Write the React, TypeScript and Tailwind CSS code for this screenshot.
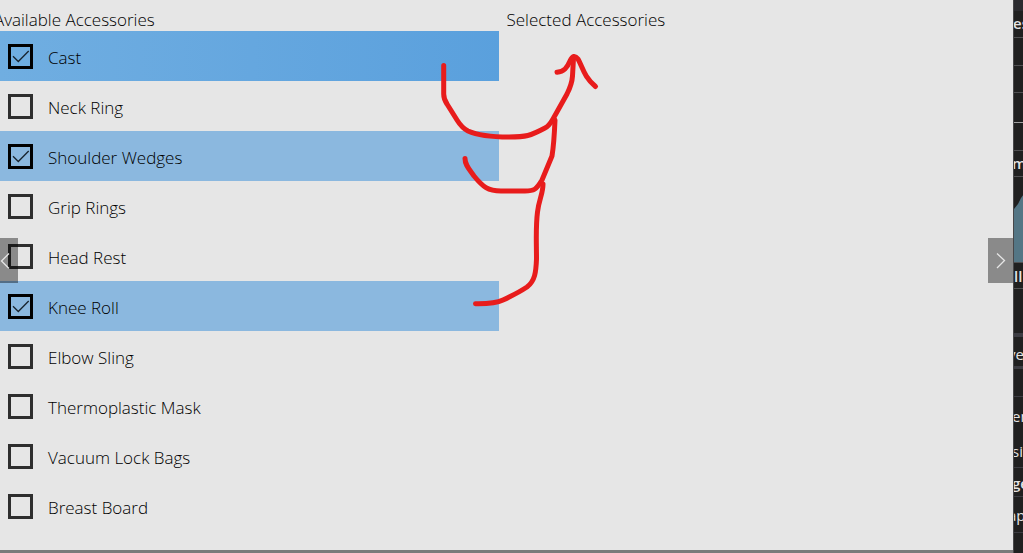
import { useState } from "react"
import clsx from "clsx"

type Accessory = {
	name: string
	checked: boolean
}

const initialAccessories: Accessory[] = [
	{ name: "Cast", checked: true },
	{ name: "Neck Ring", checked: false },
	{ name: "Shoulder Wedges", checked: true },
	{ name: "Grip Rings", checked: false },
	{ name: "Head Rest", checked: false },
	{ name: "Knee Roll", checked: true },
	{ name: "Elbow Sling", checked: false },
	{ name: "Thermoplastic Mask", checked: false },
	{ name: "Vacuum Lock Bags", checked: false },
	{ name: "Breast Board", checked: false },
]

type AccessoryRowProps = {
	accessory: Accessory
	focused: boolean
	onToggle: () => void
}

function AccessoryRow({ accessory, focused, onToggle }: AccessoryRowProps) {
	return (
		<li>
			<label
				className={clsx(
					"flex h-[50px] items-center gap-[15px] pl-2",
					accessory.checked && !focused && "bg-[#8bb8df]",
					focused && "bg-linear-to-r from-[#70aee1] to-[#5aa0dd]"
				)}>
				<span className="grid">
					<input
						type="checkbox"
						checked={accessory.checked}
						onChange={onToggle}
						className="col-start-1 row-start-1 size-[25px] appearance-none border-3 border-[#2e2e2e] checked:border-black"
					/>
					{accessory.checked && (
						<svg
							viewBox="0 0 25 25"
							className="pointer-events-none col-start-1 row-start-1 size-[25px]"
							fill="none"
							stroke="#18242e"
							strokeWidth="1.3">
							<path d="M5 12.3 L10.3 17.5 L20.7 7" />
						</svg>
					)}
				</span>
				<span className="pt-[3px]">{accessory.name}</span>
			</label>
		</li>
	)
}

function Annotation() {
	return (
		<svg
			width="620"
			height="330"
			viewBox="0 0 620 330"
			className="pointer-events-none absolute top-0 left-0"
			fill="none"
			stroke="#e81c1c"
			strokeWidth="5"
			strokeLinecap="round"
			strokeLinejoin="round">
			<path d="M443.7 65.5 V94 Q443.7 99 447 104 L457 120 Q462 128 468 131 C479 136 492 137 509 137 C526 137 530 136 545 128 Q549 126 553 119 L567 94 Q572 84 572.5 76 L573.5 58" />
			<path d="M557 72.3 C564 71.5 567 68 570 61 Q573.5 53 578 59 C583 68 584 77 595.5 86.5" />
			<path d="M465 158.5 C465 165 469 169 474 176 C483 187 488 191 501 191 H525 C534 191 536 190 542 180 L552 156 Q554 144 555 120" />
			<path d="M543 184 C543 194 539 199 537.5 212 C535.5 228 536.5 242 536.5 259 C536 272 535 281 527 287 Q518 293 503 300 Q495 304 475.5 303.7" />
		</svg>
	)
}

function BackgroundStrip() {
	return (
		<aside className="w-[10px] shrink-0 overflow-hidden border-l border-[#48484a] bg-[#202020] text-[15px] leading-none text-[#e4e4e4]">
			<div className="h-[11px] bg-[#2b2b2f]" />
			<div className="h-[27px] border-b border-[#505052] pt-[5px] font-semibold">
				<span className="-ml-px">es</span>
			</div>
			<div className="h-7 border-b border-[#505052]" />
			<div className="h-[27px] border-b border-[#505052]" />
			<div className="h-[30px] border-b border-[#a0a0a0]" />
			<div className="h-7 border-b border-[#505052]" />
			<div className="h-[26px] border-b border-[#505052] pt-[5px] font-semibold">
				<span className="-ml-[2px]">m</span>
			</div>
			<svg viewBox="0 0 10 85" className="h-[85px] w-[10px]">
				<path d="M0 32 L4 27 L7 21 L10 17 V85 H0 Z" fill="#547685" />
			</svg>
			<div className="h-[27px] border-y border-[#505052] pt-[6px] font-semibold">ll</div>
			<div className="h-12 border-b-4 border-[#3c3c42]" />
			<div className="h-8 border-b-3 border-[#3c3c42] pt-[10px]">
				<span className="-ml-[6px]">ve</span>
			</div>
			<div className="h-7 border-b border-[#3c3c42]" />
			<div className="h-9 pt-3">
				<span className="-ml-[2px]">en</span>
			</div>
			<div className="h-[35px] border-b border-[#3c3c42] pt-[11px]">
				<span className="-ml-[2px]">si</span>
			</div>
			<div className="h-[29px] border-b border-[#3c3c42] pt-[8px] font-semibold">
				<span className="-ml-[2px]">ge</span>
			</div>
			<div className="h-9 border-b border-[#3c3c42] pt-[11px]">
				<span className="-ml-[6px]">ap</span>
			</div>
		</aside>
	)
}

export default function App() {
	const [accessories, setAccessories] = useState(initialAccessories)

	const toggle = (name: string) => {
		setAccessories(
			accessories.map((a) => (a.name === name ? { ...a, checked: !a.checked } : a))
		)
	}

	return (
		<div className="flex min-h-screen overflow-hidden bg-[#202020] font-['Open_Sans','Noto_Sans',sans-serif]">
			<main className="relative flex-1 overflow-hidden border-b-3 border-[#7a7a7a] bg-[#e6e6e6] pb-[19px] text-[17px] leading-6 font-[350] text-black">
				<div className="grid grid-cols-2">
					<section className="pr-2">
						<h2 className="-ml-[6px] h-[31px] pt-2">Available Accessories</h2>
						<ul>
							{accessories.map((accessory) => (
								<AccessoryRow
									key={accessory.name}
									accessory={accessory}
									focused={accessory.name === "Cast"}
									onToggle={() => toggle(accessory.name)}
								/>
							))}
						</ul>
					</section>
					<section>
						<h2 className="h-[31px] pt-2">Selected Accessories</h2>
					</section>
				</div>

				<Annotation />

				<button
					type="button"
					aria-label="Previous"
					className="absolute top-[238px] -left-[7px] h-[45px] w-[25px] bg-black/40">
					<svg viewBox="0 0 25 45" className="h-[45px] w-[25px]" fill="none" stroke="#e6e6e6" strokeWidth="1.3">
						<path d="M16 15.5 L8.5 23 L16 30.5" />
					</svg>
				</button>
				<button
					type="button"
					aria-label="Next"
					className="absolute top-[238px] right-0 h-[45px] w-[25px] bg-black/40">
					<svg viewBox="0 0 25 45" className="h-[45px] w-[25px]" fill="none" stroke="#e6e6e6" strokeWidth="1.3">
						<path d="M9 15.5 L16.5 22.5 L9 30" />
					</svg>
				</button>
			</main>
			<BackgroundStrip />
		</div>
	)
}
